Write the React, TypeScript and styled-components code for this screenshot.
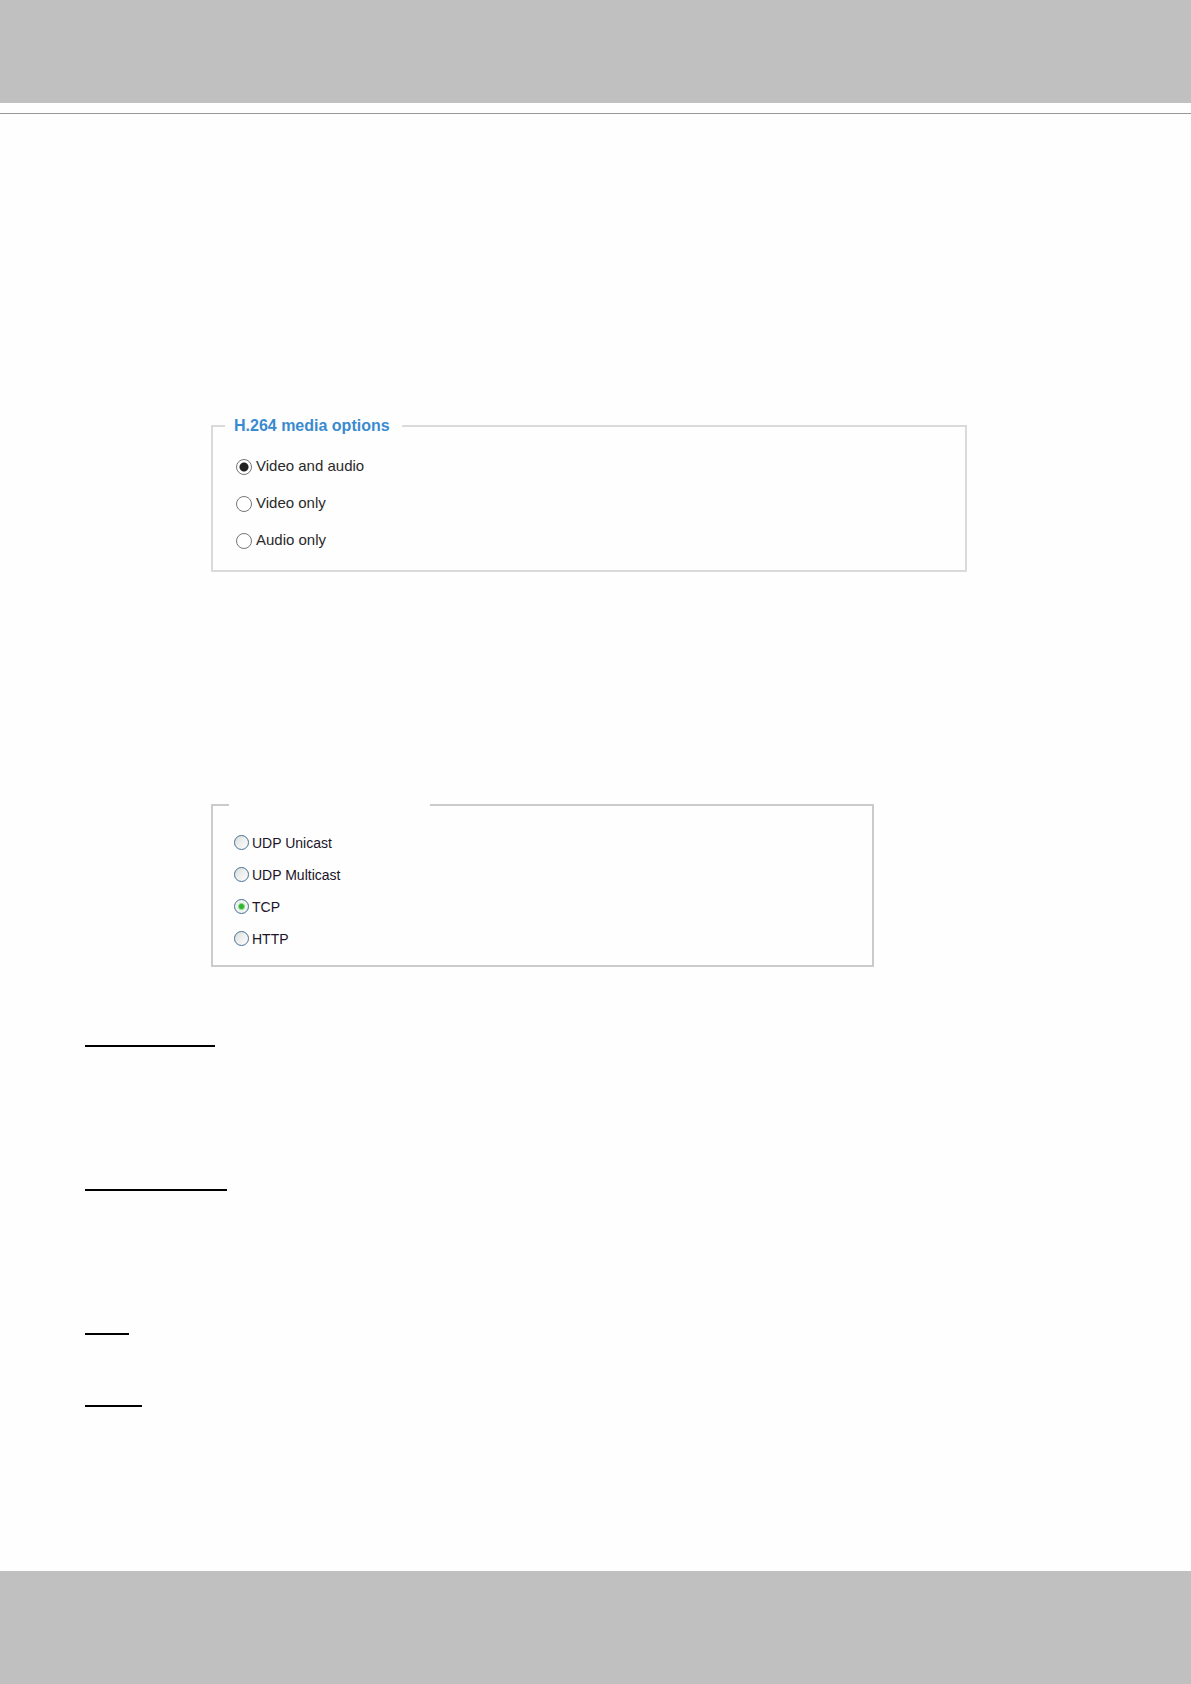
import React from "react";
import styled, { createGlobalStyle } from "styled-components";

const GlobalStyle = createGlobalStyle`
  *, *::before, *::after { box-sizing: border-box; }
  body {
    margin: 0;
    background: #fefefe;
    font-family: "Liberation Sans", Arial, sans-serif;
  }
`;

const Page = styled.div`
  display: flex;
  flex-direction: column;
  min-height: 100vh;
`;

const Header = styled.header`
  height: 114px;
  padding-bottom: 10px;
  background: #c0c0c0 content-box;
  border-bottom: 1px solid #999;
`;

const Footer = styled.footer`
  height: 113px;
  margin-top: auto;
  background: #c0c0c0;
`;

const Content = styled.main`
  display: flex;
  flex-direction: column;
  padding: 302px 85px 164px;
`;

const Panels = styled.form`
  display: flex;
  flex-direction: column;
  gap: 223px;
  padding: 0 126px;
`;

const Panel = styled.fieldset<{ $compact?: boolean }>`
  width: 100%;
  min-width: 0;
  max-width: ${(p) => (p.$compact ? "663px" : "756px")};
  margin: 0;
  padding: ${(p) => (p.$compact ? "11px 16px" : "12px 12px 11px")};
  border: 2px solid ${(p) => (p.$compact ? "#cbcbcb" : "#dadad9")};
`;

const Legend = styled.legend<{ $blank?: boolean }>`
  width: ${(p) => (p.$blank ? "201px" : "auto")};
  height: 20px;
  padding: 0 12px 0 9px;
  color: #3a8ad0;
  font-size: 16px;
  font-weight: bold;
  line-height: 20px;
`;

const Option = styled.label<{ $compact?: boolean }>`
  display: flex;
  align-items: center;
  gap: ${(p) => (p.$compact ? "3px" : "4px")};
  height: ${(p) => (p.$compact ? "32px" : "37px")};
  padding-left: ${(p) => (p.$compact ? "5px" : "11px")};
  color: ${(p) => (p.$compact ? "#201428" : "#2a2a2a")};
  font-size: ${(p) => (p.$compact ? "14px" : "15px")};
  line-height: 20px;
`;

const OptionText = styled.span<{ $compact?: boolean }>`
  padding: ${(p) => (p.$compact ? "2px 0 0" : "0 0 2px")};
`;

const Radio = styled.input`
  appearance: none;
  flex: none;
  width: 16px;
  height: 16px;
  margin: 0;
  border: 1px solid #777;
  border-radius: 50%;
  background: #fff;

  &:checked {
    background: radial-gradient(circle, #222 4px, #fff 5px);
  }
`;

const TintedRadio = styled(Radio)`
  width: 15px;
  height: 15px;
  border-color: #456f94;
  background: linear-gradient(135deg, #dcdfdc, #fff);

  &:checked {
    background: radial-gradient(circle, #2fb52f 2px, #eef3ee 4px);
  }
`;

const Rules = styled.div`
  display: flex;
  flex-direction: column;
  padding-top: 78px;
`;

const Rule = styled.hr<{ $width: number; $space: number }>`
  width: ${(p) => p.$width}px;
  height: 2px;
  margin: 0 0 ${(p) => p.$space}px;
  border: 0;
  background: #000;
`;

const mediaOptions = ["Video and audio", "Video only", "Audio only"];
const protocols = ["UDP Unicast", "UDP Multicast", "TCP", "HTTP"];
const rules = [
  { width: 130, space: 142 },
  { width: 142, space: 142 },
  { width: 44, space: 70 },
  { width: 57, space: 0 },
];

export default function App() {
  return (
    <>
      <GlobalStyle />
      <Page>
        <Header />
        <Content>
          <Panels>
            <Panel>
              <Legend>H.264 media options</Legend>
              {mediaOptions.map((name) => (
                <Option key={name}>
                  <Radio
                    type="radio"
                    name="media"
                    value={name}
                    defaultChecked={name === "Video and audio"}
                  />
                  <OptionText>{name}</OptionText>
                </Option>
              ))}
            </Panel>
            <Panel $compact aria-label="Protocol options">
              <Legend $blank />
              {protocols.map((name) => (
                <Option key={name} $compact>
                  <TintedRadio
                    type="radio"
                    name="protocol"
                    value={name}
                    defaultChecked={name === "TCP"}
                  />
                  <OptionText $compact>{name}</OptionText>
                </Option>
              ))}
            </Panel>
          </Panels>
          <Rules>
            {rules.map((rule) => (
              <Rule key={rule.width} $width={rule.width} $space={rule.space} />
            ))}
          </Rules>
        </Content>
        <Footer />
      </Page>
    </>
  );
}
